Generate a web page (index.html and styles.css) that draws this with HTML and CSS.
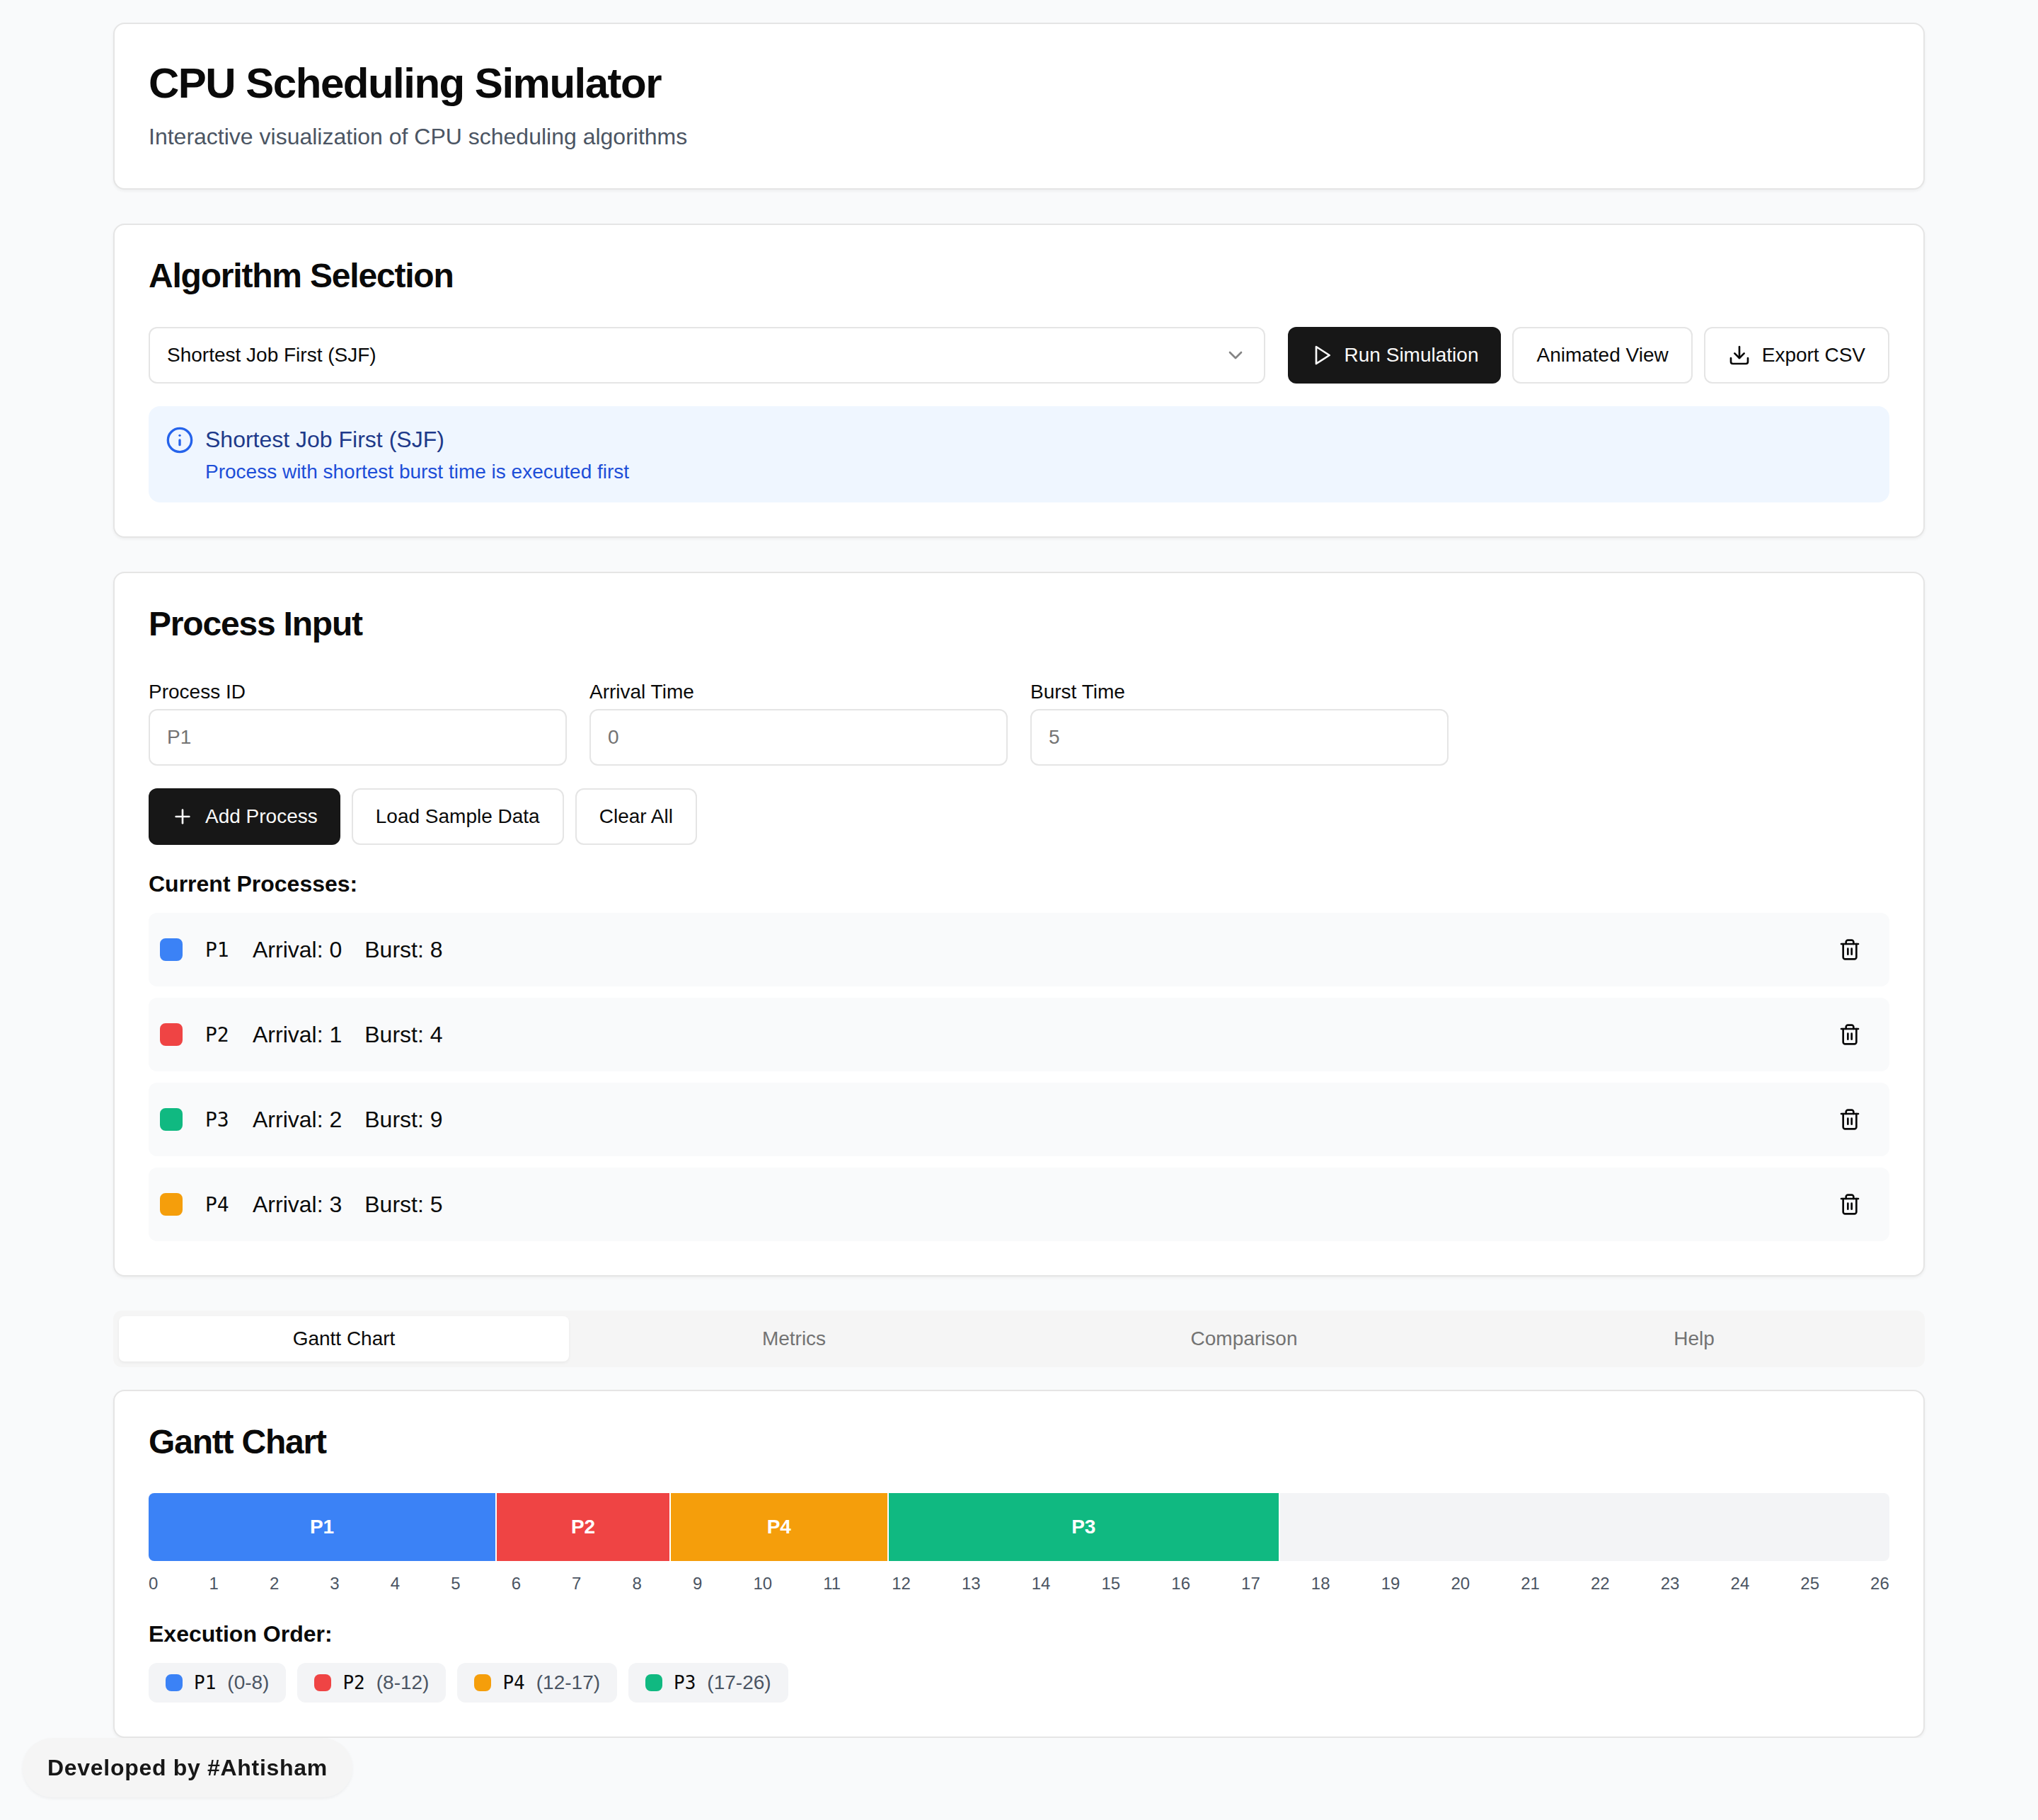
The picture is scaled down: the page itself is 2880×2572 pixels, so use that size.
FILE: index.html
```html
<!DOCTYPE html>
<html lang="en">
<head>
    <meta charset="UTF-8">
    <meta name="viewport" content="width=device-width, initial-scale=1.0">
    <title>CPU Scheduling Simulator</title>
    <link rel="stylesheet" href="styles.css">
</head>
<body>
    <div class="container">
        <!-- Page header -->
        <section class="card header-card">
            <h1>CPU Scheduling Simulator</h1>
            <p class="subtitle">Interactive visualization of CPU scheduling algorithms</p>
        </section>

        <!-- Algorithm selection -->
        <section class="card">
            <h2>Algorithm Selection</h2>
            <div class="algo-row">
                <div class="select-box">
                    <span>Shortest Job First (SJF)</span>
                    <svg class="chevron" viewBox="0 0 24 24"><path d="m6 9 6 6 6-6"/></svg>
                </div>
                <button class="btn btn-dark">
                    <svg class="icon" viewBox="0 0 24 24"><polygon points="6 3 20 12 6 21 6 3"/></svg>
                    Run Simulation
                </button>
                <button class="btn">Animated View</button>
                <button class="btn">
                    <svg class="icon" viewBox="0 0 24 24"><path d="M21 15v4a2 2 0 0 1-2 2H5a2 2 0 0 1-2-2v-4"/><polyline points="7 10 12 15 17 10"/><line x1="12" y1="15" x2="12" y2="3"/></svg>
                    Export CSV
                </button>
            </div>
            <div class="info-box">
                <svg class="info-icon" viewBox="0 0 24 24"><circle cx="12" cy="12" r="10"/><path d="M12 16v-4"/><path d="M12 8h.01"/></svg>
                <div>
                    <div class="info-title">Shortest Job First (SJF)</div>
                    <div class="info-text">Process with shortest burst time is executed first</div>
                </div>
            </div>
        </section>

        <!-- Process input -->
        <section class="card">
            <h2>Process Input</h2>
            <div class="field-grid">
                <label class="field">Process ID<input type="text" placeholder="P1"></label>
                <label class="field">Arrival Time<input type="text" placeholder="0"></label>
                <label class="field">Burst Time<input type="text" placeholder="5"></label>
            </div>
            <div class="btn-row">
                <button class="btn btn-dark">
                    <svg class="icon" viewBox="0 0 24 24"><path d="M5 12h14"/><path d="M12 5v14"/></svg>
                    Add Process
                </button>
                <button class="btn">Load Sample Data</button>
                <button class="btn">Clear All</button>
            </div>
            <h3>Current Processes:</h3>
            <div class="process-list">
                <div class="process-row">
                    <span class="swatch blue"></span><span class="pid">P1</span><span>Arrival: 0</span><span>Burst: 8</span>
                    <svg class="trash" viewBox="0 0 24 24"><path d="M3 6h18"/><path d="M19 6v14c0 1-1 2-2 2H7c-1 0-2-1-2-2V6"/><path d="M8 6V4c0-1 1-2 2-2h4c1 0 2 1 2 2v2"/><line x1="10" y1="11" x2="10" y2="17"/><line x1="14" y1="11" x2="14" y2="17"/></svg>
                </div>
                <div class="process-row">
                    <span class="swatch red"></span><span class="pid">P2</span><span>Arrival: 1</span><span>Burst: 4</span>
                    <svg class="trash" viewBox="0 0 24 24"><path d="M3 6h18"/><path d="M19 6v14c0 1-1 2-2 2H7c-1 0-2-1-2-2V6"/><path d="M8 6V4c0-1 1-2 2-2h4c1 0 2 1 2 2v2"/><line x1="10" y1="11" x2="10" y2="17"/><line x1="14" y1="11" x2="14" y2="17"/></svg>
                </div>
                <div class="process-row">
                    <span class="swatch green"></span><span class="pid">P3</span><span>Arrival: 2</span><span>Burst: 9</span>
                    <svg class="trash" viewBox="0 0 24 24"><path d="M3 6h18"/><path d="M19 6v14c0 1-1 2-2 2H7c-1 0-2-1-2-2V6"/><path d="M8 6V4c0-1 1-2 2-2h4c1 0 2 1 2 2v2"/><line x1="10" y1="11" x2="10" y2="17"/><line x1="14" y1="11" x2="14" y2="17"/></svg>
                </div>
                <div class="process-row">
                    <span class="swatch amber"></span><span class="pid">P4</span><span>Arrival: 3</span><span>Burst: 5</span>
                    <svg class="trash" viewBox="0 0 24 24"><path d="M3 6h18"/><path d="M19 6v14c0 1-1 2-2 2H7c-1 0-2-1-2-2V6"/><path d="M8 6V4c0-1 1-2 2-2h4c1 0 2 1 2 2v2"/><line x1="10" y1="11" x2="10" y2="17"/><line x1="14" y1="11" x2="14" y2="17"/></svg>
                </div>
            </div>
        </section>

        <!-- Tabs -->
        <div class="tabs">
            <div class="tab active">Gantt Chart</div>
            <div class="tab">Metrics</div>
            <div class="tab">Comparison</div>
            <div class="tab">Help</div>
        </div>

        <!-- Gantt chart -->
        <section class="card">
            <h2>Gantt Chart</h2>
            <div class="gantt">
                <div class="bar blue" style="width: 20%">P1</div>
                <div class="bar red" style="width: 10%">P2</div>
                <div class="bar amber" style="width: 12.5%">P4</div>
                <div class="bar green" style="width: 22.5%">P3</div>
            </div>
            <div class="ticks">
                <span>0</span><span>1</span><span>2</span><span>3</span><span>4</span><span>5</span><span>6</span><span>7</span><span>8</span>
                <span>9</span><span>10</span><span>11</span><span>12</span><span>13</span><span>14</span><span>15</span><span>16</span><span>17</span>
                <span>18</span><span>19</span><span>20</span><span>21</span><span>22</span><span>23</span><span>24</span><span>25</span><span>26</span>
            </div>
            <h3>Execution Order:</h3>
            <div class="order-list">
                <div class="order-item"><span class="dot blue"></span><span class="pid">P1</span><span class="range">(0-8)</span></div>
                <div class="order-item"><span class="dot red"></span><span class="pid">P2</span><span class="range">(8-12)</span></div>
                <div class="order-item"><span class="dot amber"></span><span class="pid">P4</span><span class="range">(12-17)</span></div>
                <div class="order-item"><span class="dot green"></span><span class="pid">P3</span><span class="range">(17-26)</span></div>
            </div>
        </section>
    </div>

    <div class="credit">Developed by #Ahtisham</div>
</body>
</html>
```

FILE: styles.css
```css
* {
    box-sizing: border-box;
}

body {
    margin: 0;
    background-color: #f9fafb;
    font-family: "Liberation Sans", Arial, sans-serif;
    font-size: 28px;
    color: #0a0a0a;
}

.container {
    width: 2560px;
    margin: 0 auto;
    padding: 32px 0 0;
    display: flex;
    flex-direction: column;
    gap: 48px;
}

.card {
    background: white;
    border: 2px solid #e5e5e5;
    border-radius: 16px;
    box-shadow: 0 2px 4px rgba(0, 0, 0, 0.05);
    padding: 48px;
}

h1 {
    margin: 0;
    font-size: 60px;
    line-height: 72px;
    font-weight: 700;
    letter-spacing: -1.5px;
}

.subtitle {
    margin: 15px 0 1px;
    font-size: 32px;
    line-height: 48px;
    color: #4b5563;
}

h2 {
    margin: 0 0 48px;
    font-size: 48px;
    line-height: 48px;
    font-weight: 700;
    letter-spacing: -1.2px;
}

h3 {
    margin: 35px 0 21px;
    font-size: 32px;
    line-height: 40px;
    font-weight: 700;
}

/* Algorithm row */
.algo-row {
    display: flex;
    gap: 16px;
}

.select-box {
    flex: 1;
    height: 80px;
    margin-right: 16px;
    padding: 0 24px;
    display: flex;
    align-items: center;
    justify-content: space-between;
    border: 2px solid #e5e5e5;
    border-radius: 12px;
}

.chevron {
    width: 32px;
    height: 32px;
    fill: none;
    stroke: #848484;
    stroke-width: 2;
    stroke-linecap: round;
    stroke-linejoin: round;
}

.btn {
    height: 80px;
    padding: 0 32px;
    display: flex;
    align-items: center;
    gap: 16px;
    background: white;
    color: #0a0a0a;
    border: 2px solid #e5e5e5;
    border-radius: 12px;
    font-family: inherit;
    font-size: 28px;
}

.btn-dark {
    background: #171717;
    color: #fafafa;
    border: none;
}

.icon {
    width: 32px;
    height: 32px;
    fill: none;
    stroke: currentColor;
    stroke-width: 2;
    stroke-linecap: round;
    stroke-linejoin: round;
}

.info-box {
    margin-top: 32px;
    padding: 24px;
    display: flex;
    gap: 16px;
    background: #eff6ff;
    border-radius: 16px;
}

.info-icon {
    width: 40px;
    height: 40px;
    margin-top: 4px;
    fill: none;
    stroke: #2563eb;
    stroke-width: 2;
    stroke-linecap: round;
    stroke-linejoin: round;
}

.info-title {
    font-size: 32px;
    line-height: 46px;
    color: #1e3a8a;
}

.info-text {
    margin-top: 3px;
    font-size: 28px;
    line-height: 39px;
    color: #1d4ed8;
}

/* Process input */
.field-grid {
    display: grid;
    grid-template-columns: repeat(4, 1fr);
    gap: 32px;
}

.field {
    display: flex;
    flex-direction: column;
    font-size: 28px;
    line-height: 48px;
}

.field input {
    height: 80px;
    padding: 0 24px;
    background: white;
    border: 2px solid #e5e5e5;
    border-radius: 12px;
    font-family: inherit;
    font-size: 28px;
}

.field input::placeholder {
    color: #737373;
}

.btn-row {
    margin-top: 32px;
    display: flex;
    gap: 16px;
}

.process-list {
    display: flex;
    flex-direction: column;
    gap: 16px;
}

.process-row {
    height: 104px;
    padding: 0 16px;
    display: flex;
    align-items: center;
    gap: 32px;
    background: #f9fafb;
    border-radius: 12px;
    font-size: 32px;
}

.swatch {
    width: 32px;
    height: 32px;
    border-radius: 8px;
}

.pid {
    font-family: "DejaVu Sans Mono", monospace;
    font-size: 28px;
}

.process-row .pid {
    width: 35px;
}

.trash {
    width: 32px;
    height: 32px;
    margin-left: auto;
    margin-right: 24px;
    fill: none;
    stroke: #0a0a0a;
    stroke-width: 2;
    stroke-linecap: round;
    stroke-linejoin: round;
}

.blue { background: #3b82f6; }
.red { background: #ef4444; }
.green { background: #10b981; }
.amber { background: #f59e0b; }

/* Tabs */
.tabs {
    height: 80px;
    padding: 8px;
    display: grid;
    grid-template-columns: repeat(4, 1fr);
    background: #f5f5f5;
    border-radius: 12px;
    margin-bottom: -16px;
}

.tab {
    display: flex;
    align-items: center;
    justify-content: center;
    border-radius: 8px;
    color: #737373;
}

.tab.active {
    background: white;
    color: #0a0a0a;
    box-shadow: 0 2px 4px rgba(0, 0, 0, 0.05);
}

/* Gantt chart */
.gantt {
    height: 96px;
    display: flex;
    background: #f3f4f6;
    border-radius: 8px;
    overflow: hidden;
}

.bar {
    display: flex;
    align-items: center;
    justify-content: center;
    border-right: 2px solid white;
    color: white;
    font-weight: 700;
}

.ticks {
    margin-top: 16px;
    display: flex;
    justify-content: space-between;
    font-size: 24px;
    line-height: 32px;
    color: #4b5563;
}

.order-list {
    display: flex;
    gap: 16px;
}

.order-item {
    height: 56px;
    padding: 0 24px;
    display: flex;
    align-items: center;
    gap: 16px;
    background: #f3f4f6;
    border-radius: 12px;
}

.dot {
    width: 24px;
    height: 24px;
    border-radius: 8px;
}

.order-item .pid {
    font-size: 26px;
}

.range {
    color: #4b5563;
}

.credit {
    position: fixed;
    left: 32px;
    bottom: 32px;
    height: 84px;
    padding: 0 35px;
    display: flex;
    align-items: center;
    background: #f5f5f5;
    border-radius: 42px;
    font-size: 32px;
    font-weight: 700;
    letter-spacing: 0.7px;
    color: #171717;
    box-shadow: 0 2px 4px rgba(0, 0, 0, 0.05);
}
```
